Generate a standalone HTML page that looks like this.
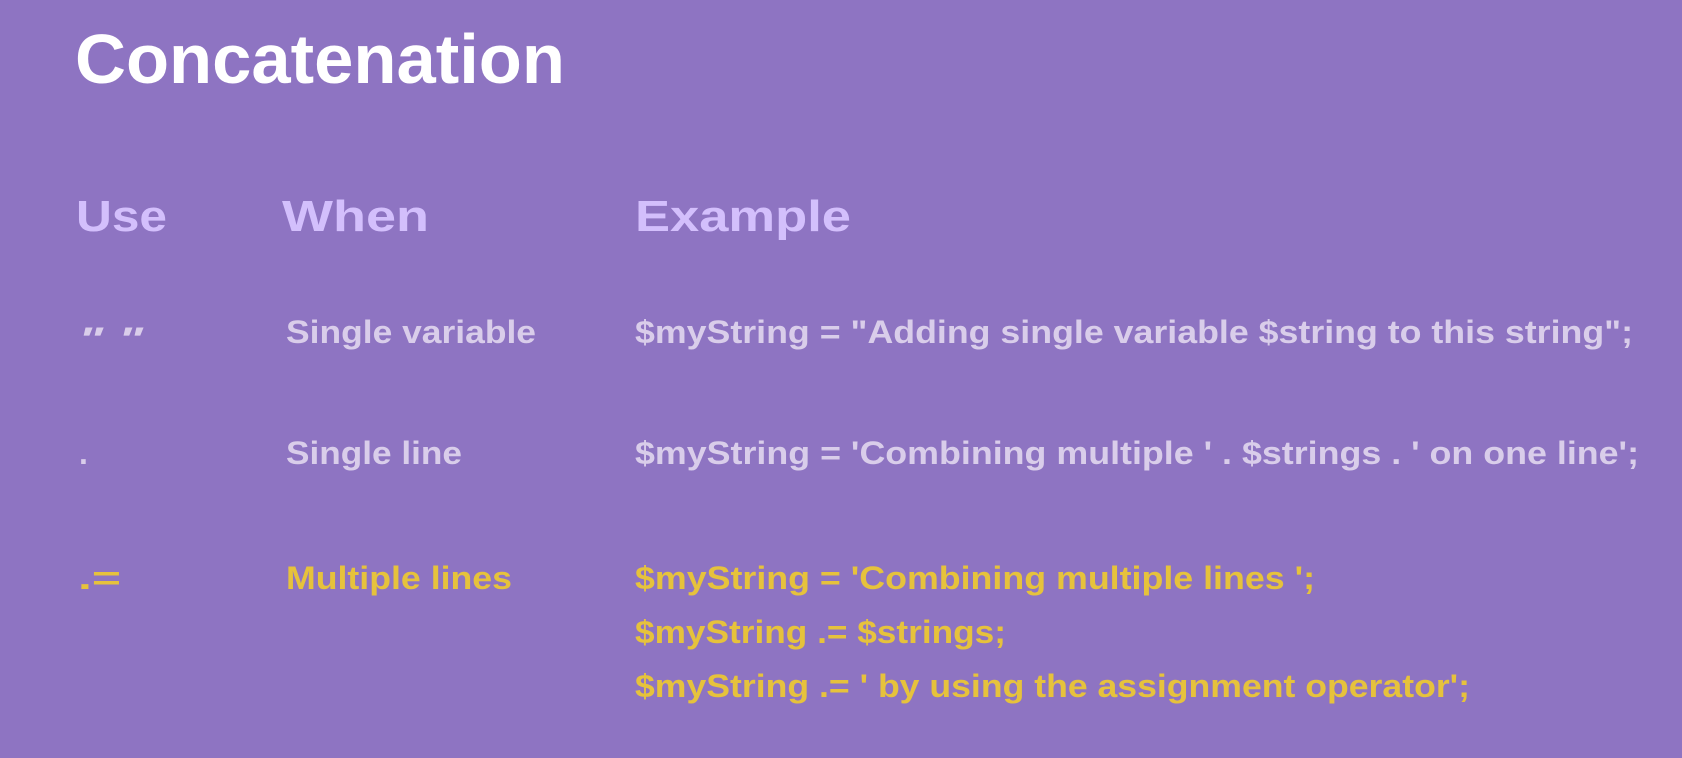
<!DOCTYPE html>
<html><head><meta charset="utf-8"><style>
html,body{margin:0;padding:0;background:#8e74c2;width:1682px;height:758px;overflow:hidden}
svg{display:block}
text{font-family:"Liberation Sans",sans-serif;font-weight:bold}
.h{fill:#d3bffc;font-size:44px}
.r{fill:#d9cdea;font-size:32px}
.y{fill:#e6c23c;font-size:32px}
</style></head><body>
<svg width="1682" height="758" viewBox="0 0 1682 758">
<rect width="1682" height="758" fill="#8e74c2"/>
<text x="75" y="83" fill="#ffffff" font-size="70" textLength="490" lengthAdjust="spacingAndGlyphs">Concatenation</text>
<text class="h" x="76" y="231" textLength="91" lengthAdjust="spacingAndGlyphs">Use</text>
<text class="h" x="282" y="231" textLength="147" lengthAdjust="spacingAndGlyphs">When</text>
<text class="h" x="635" y="231" textLength="216" lengthAdjust="spacingAndGlyphs">Example</text>

<text class="r" x="78" y="350" font-size="38" textLength="65" lengthAdjust="spacingAndGlyphs" font-style="italic">" "</text>
<text class="r" x="286" y="343" textLength="250" lengthAdjust="spacingAndGlyphs">Single variable</text>
<text class="r" x="635" y="343" textLength="998" lengthAdjust="spacingAndGlyphs">$myString = "Adding single variable $string to this string";</text>

<text class="r" x="79" y="464">.</text>
<text class="r" x="286" y="464" textLength="176" lengthAdjust="spacingAndGlyphs">Single line</text>
<text class="r" x="635" y="464" textLength="1004" lengthAdjust="spacingAndGlyphs">$myString = 'Combining multiple ' . $strings . ' on one line';</text>

<text class="y" x="78" y="589" font-size="38" textLength="43" lengthAdjust="spacingAndGlyphs">.=</text>
<text class="y" x="286" y="589" textLength="226" lengthAdjust="spacingAndGlyphs">Multiple lines</text>
<text class="y" x="635" y="589" textLength="680" lengthAdjust="spacingAndGlyphs">$myString = 'Combining multiple lines ';</text>
<text class="y" x="635" y="643" textLength="371" lengthAdjust="spacingAndGlyphs">$myString .= $strings;</text>
<text class="y" x="635" y="697" textLength="835" lengthAdjust="spacingAndGlyphs">$myString .= ' by using the assignment operator';</text>
</svg>
</body></html>
